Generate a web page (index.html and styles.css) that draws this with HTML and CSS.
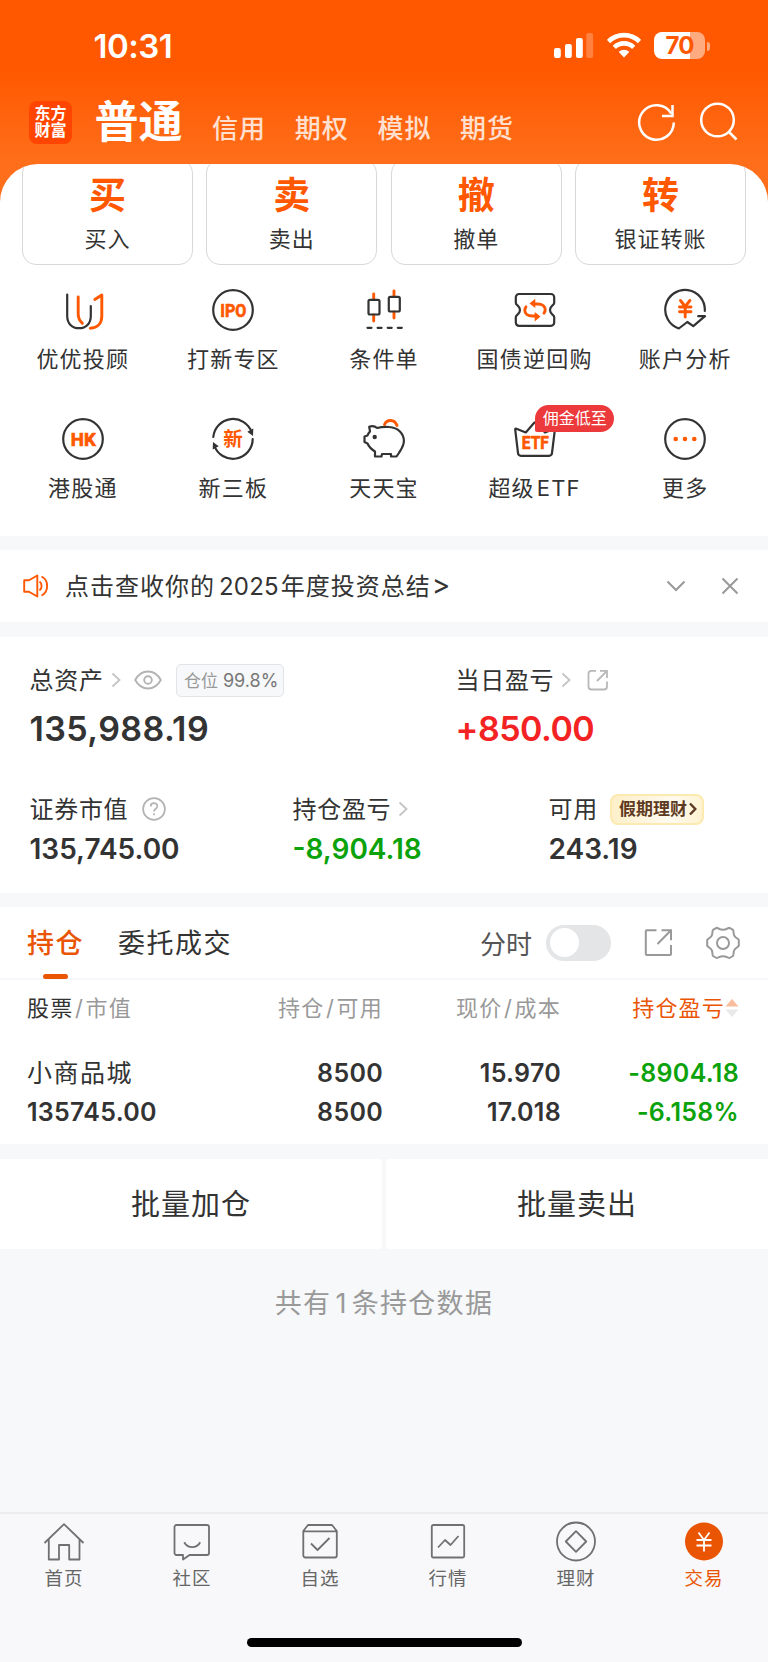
FILE: index.html
```html
<!DOCTYPE html>
<html lang="zh-CN">
<head>
<meta charset="utf-8">
<title>交易</title>
<link rel="stylesheet" href="styles.css">
</head>
<body>
	<div class="header">
		<!-- 状态栏 -->
		<div class="status">
			<span class="time">10:31</span>
			<svg class="signal" width="40" height="26" viewBox="0 0 40 26" fill="#fff">
				<rect x="0" y="15" width="6.8" height="10" rx="2"/>
				<rect x="11" y="11" width="6.8" height="14" rx="2"/>
				<rect x="22" y="5" width="6.8" height="20" rx="2"/>
				<rect x="32.3" y="0" width="6.8" height="25" rx="2" opacity=".25"/>
			</svg>
			<svg class="wifi" width="34" height="26" viewBox="0 0 34 26" fill="none" stroke="#fff" stroke-width="4.6">
				<path d="M1.5 9.5C10 1 24 1 32.500 9.5"/>
				<path d="M7.300 15.300c5.500-5.300 13.900-5.300 19.400 0"/>
				<path d="M17 25.500l-5.300-5.600c3-2.800 7.600-2.800 10.600 0z" fill="#fff" stroke="none"/>
			</svg>
			<div class="battery"><span>70</span></div>
			<i class="nub"></i>
		</div>
		<!-- 账户类型 -->
		<div class="nav">
			<div class="logo">东方<br>财富</div>
			<span class="cur">普通</span>
			<a>信用</a>
			<a>期权</a>
			<a>模拟</a>
			<a>期货</a>
			<svg class="refresh" width="40" height="40" viewBox="0 0 40 40" fill="none" stroke="#fff" stroke-width="2.500">
				<path d="M34.300 11.500A17.300 17.300 0 1 0 36.800 20.500"/>
				<path d="M35.500 3v11H25"/>
			</svg>
			<svg width="40" height="40" viewBox="0 0 40 40" fill="none" stroke="#fff" stroke-width="2.500">
				<circle cx="18.500" cy="18" r="16.300"/>
				<path d="M29.500 29.500l8 8"/>
			</svg>
		</div>
	</div>

	<div class="panel">
		<div class="cards">
			<div class="card"><b>买</b><span>买入</span></div>
			<div class="card"><b>卖</b><span>卖出</span></div>
			<div class="card"><b>撤</b><span>撤单</span></div>
			<div class="card"><b>转</b><span>银证转账</span></div>
		</div>
		<!-- 功能入口 -->
		<div class="grid">
			<div class="item">
				<svg class="ico" viewBox="0 0 44 44">
					<path d="M6.200 6.500V28C6.200 35.500 11 40.200 18 40.200S29.800 35.500 29.800 28V18"/>
					<path class="o" d="M17.200 9V26c0 4 1.500 7 4.200 9.300M33.800 11.500L40.800 7V28c0 7-4 12-11.500 12.200"/>
				</svg>
				<span>优优投顾</span>
			</div>
			<div class="item">
				<svg class="ico" viewBox="0 0 44 44">
					<circle cx="22" cy="22" r="19.800"/>
					<text x="22.300" y="28.500" textLength="26" lengthAdjust="spacingAndGlyphs">IPO</text>
				</svg>
				<span>打新专区</span>
			</div>
			<div class="item">
				<svg class="ico" viewBox="0 0 44 44">
					<path class="o" d="M11.700 6v5M11.700 27v6M32 3v5M32 24v6"/>
					<rect x="6.500" y="11.800" width="11" height="14.700" rx="1.500"/>
					<rect x="26.800" y="8.800" width="11" height="14.700" rx="1.500"/>
					<path d="M5.500 39.800h4M15.600 39.800h4M25.700 39.800h4M35.800 39.800h4"/>
				</svg>
				<span>条件单</span>
			</div>
			<div class="item">
				<svg class="ico" viewBox="0 0 44 44">
					<path d="M6 6H38a3.200 3.200 0 0 1 3.200 3.200V15c0 2-4.200 2.500-4.200 7s4.200 5 4.200 7v5.500A3.200 3.200 0 0 1 38 37.800H6a3.200 3.200 0 0 1-3.200-3.200V29c0-2 4.200-2.500 4.200-7s-4.200-5-4.200-7V9.200A3.200 3.200 0 0 1 6 6z"/>
					<path class="o" d="M20 16h4.500c5 0 7.700 2.700 7.700 5.800 0 1.500-.5 2.500-1.200 3.400M24 28h-4.500c-5 0-7.700-2.700-7.700-5.800 0-1.500.5-2.500 1.200-3.400"/>
					<path class="of" d="M16.500 15.600l5.800-4.800v9.300zM27.500 28.400l-5.800-4.300v9.300z"/>
				</svg>
				<span>国债逆回购</span>
			</div>
			<div class="item">
				<svg class="ico" viewBox="0 0 44 44">
					<path d="M41.800 23A19.800 19.800 0 1 0 15.800 40.500L24.300 34l6 4.200L42 28.200h-6.800"/>
					<path class="o" d="M17.500 12.500l4.700 6 4.700-6M16.500 19h11.500M16.500 23.800h11.500M22.200 19v10"/>
				</svg>
				<span>账户分析</span>
			</div>
			<div class="item">
				<svg class="ico" viewBox="0 0 44 44">
					<circle cx="22" cy="22" r="19.800"/>
					<text x="22.300" y="28.500" textLength="25" lengthAdjust="spacingAndGlyphs">HK</text>
				</svg>
				<span>港股通</span>
			</div>
			<div class="item">
				<svg class="ico" viewBox="0 0 44 44">
					<path d="M2.300 20A19.800 19.800 0 0 1 40.800 15.500M41.700 22A19.800 19.800 0 0 1 3.200 28.500"/>
					<path class="bf" d="M36.300 14.800l6-3.300-.3 7.500zM7.700 29.200l-6 3.300.3-7.500z"/>
					<text class="cn" x="22" y="29">新</text>
				</svg>
				<span>新三板</span>
			</div>
			<div class="item">
				<svg class="ico" viewBox="0 0 44 44">
					<path class="o" d="M22.500 7.500c2.500-5.500 10-5.500 12.500 1"/>
					<path d="M8 14.500L7.200 9.800c3-1.300 6.300-.2 8 1.200 4-1.200 8-1.400 12-1 9 .6 14.700 6.500 14.700 14 0 5-3 8.500-5 12l-2.400 3.500H29V37h-9l-.5 2.500H13V34.500C9 32 7 30 5.500 26.500L2.500 25v-5.500l3-1c.5-1.500 1-2.500 2.500-4z"/>
					<circle class="bf" cx="12.700" cy="20" r="2.200"/>
				</svg>
				<span>天天宝</span>
			</div>
			<div class="item">
				<svg class="ico" viewBox="0 0 44 44">
					<path d="M2.200 12.500L5 36a3 3 0 0 0 3 2.800H36a3 3 0 0 0 3-2.800L41.900 12.500c.1-.8-.5-1-1.200-.6L32 15.500 23 5.800c-.6-.6-1.200-.6-1.800 0L12.800 15.500 3.400 11.800c-.8-.3-1.300 0-1.200.7z"/>
					<text x="22.300" y="32.300" textLength="27" lengthAdjust="spacingAndGlyphs">ETF</text>
				</svg>
				<em class="badge">佣金低至</em>
				<span>超级<s class="thin"></s>ETF</span>
			</div>
			<div class="item">
				<svg class="ico" viewBox="0 0 44 44">
					<circle cx="22" cy="22" r="19.800"/>
					<path class="of" d="M10.400 22a2.300 2.300 0 1 1 4.600 0a2.300 2.300 0 1 1-4.600 0M19.700 22a2.300 2.300 0 1 1 4.600 0a2.300 2.300 0 1 1-4.600 0M29 22a2.300 2.300 0 1 1 4.600 0a2.300 2.300 0 1 1-4.600 0"/>
				</svg>
				<span>更多</span>
			</div>
		</div>
	</div>

	<!-- 公告 -->
	<div class="notice">
		<svg width="26" height="24" viewBox="0 0 26 24" fill="none" stroke="#ff5800" stroke-width="1.900" stroke-linejoin="round">
			<path d="M1.200 6.300H6L14.300 1.500v21L6 17.700H1.200zM16.500 7.500c2.800 2 2.800 7 0 9M18.500 2.500c7.500 3.500 7.500 15.500 0 19"/>
		</svg>
		<p>点击查收你的<s></s><span class="year">2025</span><s class="thin"></s>年度投资总结<span class="gt">&gt;</span></p>
		<svg class="down" width="20" height="16" viewBox="0 0 20 16" fill="none" stroke="#999" stroke-width="2"><path d="M1.500 3.500l8.500 8.500 8.500-8.500"/></svg>
		<svg width="18" height="18" viewBox="0 0 18 18" fill="none" stroke="#999" stroke-width="2"><path d="M1.500 1.500l15 15M16.500 1.500l-15 15"/></svg>
	</div>

	<!-- 资产 -->
	<div class="assets">
		<div class="total">
			<div class="col">
				<div class="name"><span>总资产</span>
					<svg class="more" viewBox="0 0 10 16"><path d="M1.500 1.500L8.500 8l-7 6.500"/></svg>
					<svg class="eye" width="28" height="20" viewBox="0 0 28 20" fill="none" stroke="#b3b3b3" stroke-width="1.900"><path d="M1.200 10C7.500-1.300 20.500-1.300 26.800 10 20.500 21.300 7.500 21.300 1.200 10z"/><circle cx="14" cy="10" r="3.800"/></svg>
					<div class="tag">仓位 <b>99.8%</b></div>
				</div>
				<div class="big">135,988.19</div>
			</div>
			<div class="col">
				<div class="name"><span>当日盈亏</span>
					<svg class="more" viewBox="0 0 10 16"><path d="M1.500 1.500L8.500 8l-7 6.500"/></svg>
					<svg class="out" width="22" height="22" viewBox="0 0 22 22" fill="none" stroke="#b8b8b8" stroke-width="1.800"><path d="M9 1.800H4.500a3 3 0 0 0-3 3V17.500a3 3 0 0 0 3 3H17a3 3 0 0 0 3-3V12.500M13 1.800h7V9M20 1.800L10 12"/></svg>
				</div>
				<div class="big red">+850.00</div>
			</div>
		</div>
		<div class="detail">
			<div class="col">
				<div class="name"><span>证券市值</span>
					<svg class="ask" width="24" height="24" viewBox="0 0 24 24" fill="none" stroke="#b3b3b3" stroke-width="1.700"><circle cx="12" cy="12" r="10.900"/><path d="M8.700 9.400c0-4.300 6.600-4.300 6.600-.2 0 2.500-3.300 2.600-3.300 5.300M12 16.300v2"/></svg>
				</div>
				<div class="num">135,745.00</div>
			</div>
			<div class="col">
				<div class="name"><span>持仓盈亏</span>
					<svg class="more" viewBox="0 0 10 16"><path d="M1.500 1.500L8.500 8l-7 6.500"/></svg>
				</div>
				<div class="num green">-8,904.18</div>
			</div>
			<div class="col">
				<div class="name"><span>可用</span>
					<div class="gold">假期理财<svg width="8" height="14" viewBox="0 0 8 14" fill="none" stroke="#5e3a22" stroke-width="2.400"><path d="M1 1.500L6.300 7 1 12.500"/></svg></div>
				</div>
				<div class="num">243.19</div>
			</div>
		</div>
	</div>

	<!-- 持仓列表 -->
	<div class="hold">
		<div class="tabs">
			<span class="tab on">持仓</span>
			<span class="tab">委托成交</span>
			<span class="fs">分时</span>
			<div class="switch"><i></i></div>
			<svg class="share" width="30" height="30" viewBox="0 0 30 30" fill="none" stroke="#999" stroke-width="2"><path d="M12.500 2.200H2.800a1 1 0 0 0-1 1V26a1 1 0 0 0 1 1H26a1 1 0 0 0 1-1V17M17.500 2.200H27v10M27 2.200L13.500 16"/></svg>
			<svg class="gear" width="34" height="34" viewBox="0 0 34 34" fill="none" stroke="#999" stroke-width="2" stroke-linejoin="round"><path d="M10.500 1.800c1.500 0 3 2 6.500 2s5-2 6.500-2l3.500 2c1 1.500 0 4 1.500 6.200 1.200 2 3.500 2.500 4.300 4v5.800c-.8 1.500-3.100 2-4.300 4-1.500 2.400-.5 4.700-1.500 6.200l-3.500 2c-1.500 0-3-1.800-6.500-1.800s-5 1.800-6.500 1.800l-3.500-2c-1-1.500 0-3.800-1.500-6.200-1.200-2-3.500-2.500-4.300-4V14c.8-1.500 3.100-2 4.300-4C7 7.800 6 5.300 7 3.800z"/><circle cx="17" cy="17" r="6"/></svg>
		</div>
		<div class="row th">
			<span class="c1"><b>股票</b><i>/</i>市值</span>
			<span>持仓<i>/</i>可用</span>
			<span>现价<i>/</i>成本</span>
			<span class="sort">持仓盈亏<svg width="14" height="20" viewBox="0 0 14 20"><path d="M7 1l6.500 7.500H.5z" fill="#f9bd9c"/><path d="M7 19l6.500-7.500H.5z" fill="#e9e9e9"/></svg></span>
		</div>
		<div class="row td">
			<span class="c1 stock">小商品城</span>
			<span>8500</span>
			<span>15.970</span>
			<span class="green">-8904.18</span>
		</div>
		<div class="row td">
			<span class="c1">135745.00</span>
			<span>8500</span>
			<span>17.018</span>
			<span class="green">-6.158%</span>
		</div>
	</div>

	<div class="btns">
		<div>批量加仓</div>
		<div>批量卖出</div>
	</div>
	<div class="count">共有<s></s>1<s></s>条持仓数据</div>

	<!-- 底部导航 -->
	<div class="footer">
		<div class="fnav">
			<div><svg viewBox="0 0 42 42"><path d="M1.500 22L21 3.200 40.500 22M5.800 18.500V38.500H16V24h10.200V38.500H36.500V18.500"/></svg>首页</div>
			<div><svg viewBox="0 0 42 42"><path d="M5.500 4H36a2 2 0 0 1 2 2V32a2 2 0 0 1-2 2H18.500l-6.500 4.500V34H5.500a2 2 0 0 1-2-2V6a2 2 0 0 1 2-2z"/><path d="M13.200 21.200c3.500 6.500 12.500 6.500 16 0"/></svg>社区</div>
			<div><svg viewBox="0 0 42 42"><path d="M4.300 10L9 4H33l4.800 6V34.500a2 2 0 0 1-2 2H6.300a2 2 0 0 1-2-2zM4.300 10.300H37.800"/><path d="M12 22.500l6.500 6.500L30.500 17"/></svg>自选</div>
			<div><svg viewBox="0 0 42 42"><rect x="4.800" y="4" width="32.400" height="32.500" rx="1.500"/><path d="M11 26.500l7-7.500 5.500 5L31.500 15"/></svg>行情</div>
			<div><svg viewBox="0 0 42 42"><circle cx="21" cy="20.500" r="19"/><path d="M21 10.200L31.200 20.500 21 30.800 10.800 20.500z"/></svg>理财</div>
			<div class="act"><svg viewBox="0 0 42 42"><circle class="dot" cx="21" cy="20.500" r="19"/><path class="yen" d="M15.500 11.500L21 19l5.500-7.500M13.500 19h15M13.500 24.500h15M21 19v11.500"/></svg>交易</div>
		</div>
		<i class="bar"></i>
	</div>
</body>
</html>
```

FILE: styles.css
```css
*{
	margin: 0;
	padding: 0;
	box-sizing: border-box;
}
body {
	width: 768px;
	height: 1662px;
	display: flex;
	flex-direction: column;
	background-color: #f6f8fa;
	color: #333;
	font-family: Inter, "Noto Sans CJK SC", sans-serif;
	overflow: hidden;
}
svg {
	display: block;
	flex: none;
}
i, em {
	font-style: normal;
}
/* 中文和数字之间的空隙 */
s {
	display: inline-block;
	width: 4px;
}
.thin {
	width: 2px;
}
.red {
	color: #f42323;
}
.green {
	color: #0ba20b;
}

/* 头部 */
.header {
	height: 210px;
	flex: none;
	background: linear-gradient(#ff5800 70px, #ff6e1a 160px);
}
.status {
	height: 92px;
	padding-left: 93.500px;
	display: flex;
	align-items: center;
	color: #fff;
}
.time {
	width: 460px;
	font-size: 33px;
	font-weight: 600;
	letter-spacing: -0.500px;
}
.wifi {
	margin-left: 13px;
	margin-top: -2px;
}
.battery {
	width: 51px;
	height: 27px;
	margin-left: 13.500px;
	margin-top: -1px;
	border-radius: 8px;
	background: linear-gradient(90deg, #fff 36px, #ffab80 36px);
	color: #ff5800;
	font-size: 24px;
	font-weight: 700;
	line-height: 27px;
	letter-spacing: -0.800px;
	text-align: center;
}
.nub {
	width: 3px;
	height: 9px;
	margin-left: 2px;
	border-radius: 0 4px 4px 0;
	background-color: #ffab80;
}
.nav {
	height: 60px;
	padding-left: 29px;
	display: flex;
	align-items: center;
	color: #fff;
}
.logo {
	width: 43px;
	height: 43px;
	padding-top: 4px;
	border-radius: 8px;
	background-color: #ff4500;
	font-size: 16px;
	font-weight: 700;
	line-height: 17.500px;
	text-align: center;
}
.cur {
	width: 117px;
	padding-left: 22.500px;
	margin-right: 23px;
	font-size: 44px;
	font-weight: 700;
	line-height: 60px;
	white-space: nowrap;
}
.nav a {
	width: 82.700px;
	padding-top: 14px;
	font-size: 26px;
	font-weight: 500;
	letter-spacing: 1px;
	line-height: 46px;
	color: #ffe0d0;
}
.refresh {
	margin-left: 94px;
	margin-right: 22.500px;
}

/* 白色面板,卡片上边被头部盖住一点 */
.panel {
	height: 372.500px;
	flex: none;
	margin-top: -46.500px;
	border-radius: 38px 38px 0 0;
	background-color: #fff;
	overflow: hidden;
}
.cards {
	display: flex;
	gap: 13.300px;
	margin-top: -5px;
	padding: 0 22px;
}
.card {
	flex: 1;
	height: 106px;
	padding-top: 12px;
	border: 1px solid #d8d8d8;
	border-radius: 14px;
	text-align: center;
}
.card b {
	display: block;
	font-size: 37px;
	font-weight: 700;
	line-height: 48px;
	color: #ff5800;
}
.card span {
	display: block;
	font-size: 22px;
	line-height: 38px;
	letter-spacing: 1px;
}
.grid {
	display: grid;
	grid-template-columns: repeat(5, 1fr);
	grid-auto-rows: 129px;
	padding: 23.500px 7.500px 0;
}
.item {
	position: relative;
	display: flex;
	flex-direction: column;
	align-items: center;
	font-size: 22px;
	line-height: 30px;
	letter-spacing: 1.200px;
}
.item span {
	margin-top: 12px;
}
.ico {
	width: 44px;
	height: 44px;
	fill: none;
	stroke: #333;
	stroke-width: 2.200;
	stroke-linecap: round;
	stroke-linejoin: round;
}
.ico .o {
	stroke: #ff5800;
	stroke-width: 2.900;
}
.ico .of {
	fill: #ff5800;
	stroke: none;
}
.ico .bf {
	fill: #333;
	stroke: none;
}
.ico text {
	fill: #ff5800;
	stroke: #ff5800;
	stroke-width: 0.700;
	font-family: Roboto, sans-serif;
	font-size: 18.500px;
	font-weight: 700;
	letter-spacing: 0;
	text-anchor: middle;
}
.ico .cn {
	font-family: "Noto Sans CJK SC", sans-serif;
	font-size: 19.500px;
	stroke: none;
}
.badge {
	position: absolute;
	left: 76px;
	top: -12px;
	width: 79px;
	height: 27px;
	border-radius: 13.500px 13.500px 13.500px 2px;
	background-color: #ec3a3c;
	color: #fff;
	font-size: 16px;
	line-height: 27px;
	letter-spacing: 0;
	text-align: center;
}

/* 公告 */
.notice {
	height: 72px;
	flex: none;
	margin: 14px 0 15px;
	padding: 0 29px 0 23px;
	display: flex;
	align-items: center;
	background-color: #fff;
}
.notice p {
	flex: 1;
	margin: -3px 0 0 16px;
	font-size: 24px;
	letter-spacing: 1px;
}
.year {
	letter-spacing: 0.200px;
}
.gt {
	margin-left: 1px;
	font-size: 28px;
	line-height: 24px;
}
.down {
	margin-right: 35px;
}

/* 资产 */
.assets {
	height: 256px;
	flex: none;
	padding-top: 25px;
	background-color: #fff;
}
.total, .detail {
	display: flex;
	padding-left: 29.500px;
}
.total {
	height: 129px;
}
.name {
	display: flex;
	align-items: center;
	height: 36px;
	font-size: 24px;
	letter-spacing: 0.700px;
	white-space: nowrap;
}
.name span {
	margin-top: -3px;
}
.total .col:first-child {
	width: 426px;
}
.detail .col:first-child {
	width: 263px;
}
.detail .col:nth-child(2) {
	width: 256px;
}
.more {
	width: 10px;
	height: 16px;
	margin-left: 7px;
	fill: none;
	stroke: #c4c4c4;
	stroke-width: 1.800;
}
.eye {
	margin-left: 13px;
}
.tag {
	width: 108px;
	height: 33px;
	margin-left: 14.500px;
	padding-left: 7px;
	border: 1px solid #e2e4e8;
	border-radius: 5px;
	background-color: #f7f8fa;
	color: #999;
	font-size: 17px;
	letter-spacing: 0;
	line-height: 31px;
}
.tag b {
	color: #777;
	font-size: 18px;
	font-weight: 400;
}
.out {
	margin-left: 16px;
}
.ask {
	margin-left: 14px;
}
.big {
	font-size: 34px;
	font-weight: 600;
	line-height: 62px;
	letter-spacing: 0.400px;
}
.big.red {
	letter-spacing: -0.500px;
}
.num {
	font-size: 28px;
	font-weight: 600;
	line-height: 45px;
}
.gold {
	display: flex;
	align-items: center;
	gap: 2px;
	width: 94px;
	height: 31px;
	margin-left: 12px;
	padding-left: 7px;
	border: 2px solid #fdeab0;
	border-radius: 8px;
	background: linear-gradient(100deg, #fdefc8, #fffaf0 65%, #fff3cf);
	color: #5e3a22;
	font-size: 17px;
	font-weight: 700;
	letter-spacing: 0;
	line-height: 24px;
}

/* 持仓 */
.hold {
	height: 236.500px;
	flex: none;
	margin-top: 14px;
	background-color: #fff;
}
.tabs {
	height: 73px;
	padding-left: 27px;
	display: flex;
	align-items: center;
	border-bottom: 2px solid #f6f7fa;
}
.tab {
	position: relative;
	margin-right: 34px;
	padding-top: 3px;
	font-size: 27px;
	letter-spacing: 1.500px;
	line-height: 68px;
}
.on {
	color: #ea5504;
	font-weight: 500;
}
/* 选中下划线 */
.on::after {
	content: "";
	position: absolute;
	left: 16px;
	bottom: -1px;
	width: 25px;
	height: 5px;
	border-radius: 2.500px;
	background-color: #ea5504;
}
.fs {
	margin-left: auto;
	font-size: 26px;
	color: #555;
}
.switch {
	width: 65px;
	height: 36px;
	margin-left: 14px;
	padding: 3.500px;
	border-radius: 18px;
	background-color: #e3e5e7;
}
.switch i {
	display: block;
	width: 29px;
	height: 29px;
	border-radius: 50%;
	background-color: #fff;
}
.share {
	margin-left: 33px;
}
.gear {
	margin-left: 32px;
	margin-right: 28px;
}
.row {
	display: grid;
	grid-template-columns: 200px 156px 178px 178px;
	padding-left: 27px;
	text-align: right;
	font-size: 25px;
	font-weight: 600;
	line-height: 39px;
}
.row .c1 {
	text-align: left;
}
.th {
	height: 74px;
	font-size: 22px;
	font-weight: 400;
	line-height: 56px;
	letter-spacing: 1.200px;
	color: #999;
}
.th b {
	font-weight: 400;
	color: #333;
}
.th i {
	margin: 0 1.500px;
}
.td {
	letter-spacing: 0.300px;
}
.sort {
	display: flex;
	align-items: center;
	justify-content: flex-end;
	height: 56px;
	color: #ea5504;
}
.row .stock {
	font-weight: 400;
	letter-spacing: 1.500px;
}

.btns {
	display: flex;
	gap: 4px;
	flex: none;
	margin-top: 15.500px;
}
.btns div {
	flex: 1;
	height: 89.500px;
	background-color: #fff;
	font-size: 29px;
	line-height: 92px;
	letter-spacing: 1px;
	text-align: center;
}
.count {
	margin-top: 35px;
	font-size: 27px;
	line-height: 40px;
	letter-spacing: 1.300px;
	text-align: center;
	color: #999;
}

/* 底部导航 */
.footer {
	height: 150px;
	flex: none;
	margin-top: auto;
	border-top: 2px solid #ececee;
	background-color: #f8f8fa;
}
.fnav {
	display: flex;
	padding-top: 6.500px;
}
.fnav div {
	flex: 1;
	display: flex;
	flex-direction: column;
	align-items: center;
	height: 76px;
	font-size: 18.500px;
	line-height: 31px;
	letter-spacing: 1px;
	color: #666;
}
.fnav svg {
	width: 42px;
	height: 42px;
	fill: none;
	stroke: #707070;
	stroke-width: 1.800;
	stroke-linejoin: round;
}
.fnav .act {
	color: #ea5504;
}
.fnav .dot {
	fill: #ea5504;
	stroke: none;
}
.fnav .yen {
	stroke: #fff;
}
.bar {
	display: block;
	width: 275px;
	height: 9px;
	margin: 41px auto 0;
	border-radius: 5px;
	background-color: #000;
}
```
